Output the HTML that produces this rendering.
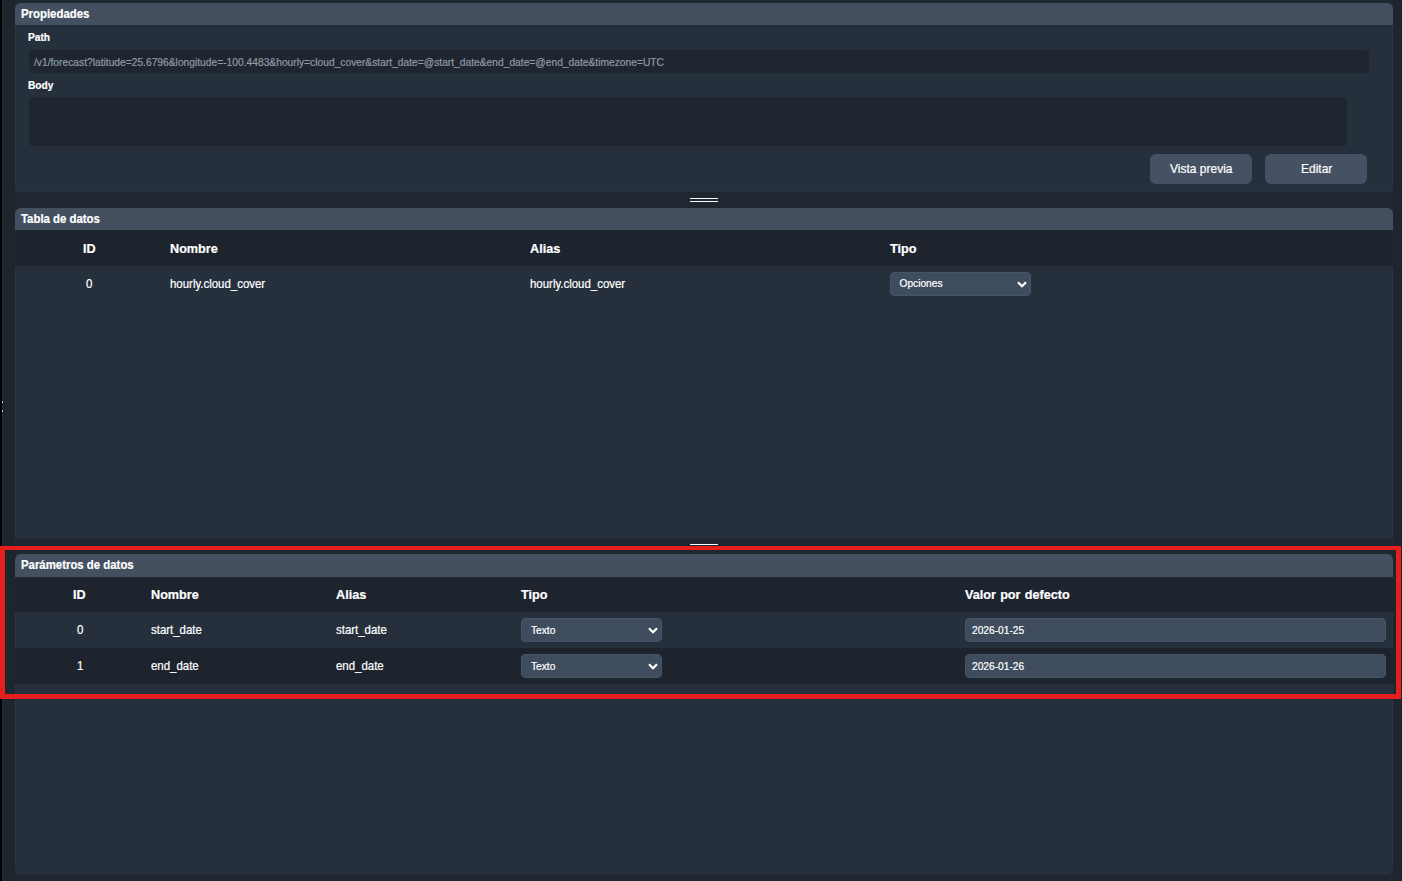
<!DOCTYPE html>
<html><head><meta charset="utf-8">
<style>
html,body{margin:0;padding:0;}
body{width:1402px;height:881px;overflow:hidden;position:relative;background:#1d252d;-webkit-text-stroke:0.2px currentColor;font-family:"Liberation Sans",sans-serif;color:#fff;}
.a{position:absolute;}
.strip{left:0;top:0;width:2px;height:881px;background:#000;}
.strip2{left:2px;top:0;width:1px;height:881px;background:#232c37;}
.panel{position:absolute;left:15px;width:1378px;background:#25303c;border-radius:6px 6px 0 0;overflow:hidden;box-shadow:inset 0 0 0 1px rgba(255,255,255,0.025);}
.hdr{position:absolute;left:0;top:0;width:1378px;background:#445060;}
.ttl,.lbl,.th,.td,.btn span,.sel span,.fld span,.inp span{transform:scaleY(1.08);transform-origin:0 90%;}
.ttl{position:absolute;left:6px;font-weight:bold;font-size:11.4px;white-space:nowrap;line-height:1;}
.lbl{position:absolute;font-weight:bold;font-size:10.2px;line-height:1;white-space:nowrap;}
.inp{position:absolute;background:#1f2630;border-radius:4px;}
.btn{position:absolute;background:#465263;border-radius:6px;font-size:12px;line-height:1;}
.btn span{position:absolute;white-space:nowrap;}
.row{position:absolute;left:0;width:1378px;}
.dark{background:#1e242e;}
.th{position:absolute;font-weight:bold;font-size:12.65px;word-spacing:0.7px;line-height:1;white-space:nowrap;}
.td{position:absolute;font-size:11.45px;line-height:1;white-space:nowrap;}
.sel{position:absolute;background:#3e4c5e;border-radius:5px;box-shadow:inset 0 0 0 1px #46566a;font-size:10.2px;line-height:1;}
.sel span{position:absolute;white-space:nowrap;}
.sel svg{position:absolute;}
.fld{position:absolute;background:#3e4c5e;border-radius:5px;font-size:10.2px;line-height:1;box-shadow:inset 0 0 0 1px #46566a;}
.fld span{position:absolute;white-space:nowrap;}
.split{position:absolute;left:690px;width:28px;height:1px;background:#fff;}
.red{position:absolute;left:0;top:546px;width:1401px;height:153px;box-sizing:border-box;border:5px solid #e61e1e;border-top-width:4px;border-bottom-width:5px;}
</style></head>
<body>
<div class="a" style="left:15px;top:0;width:1378px;height:881px;background:#1f2731;"></div>
<div class="a strip"></div>
<div class="a strip2"></div>

<!-- Panel 1 -->
<div class="panel" style="top:3px;height:189px;border-radius:6px 6px 4px 4px;">
  <div class="hdr" style="height:22px;"></div>
  <div class="ttl" style="top:6px;">Propiedades</div>
  <div class="lbl" style="left:13px;top:30px;">Path</div>
  <div class="inp" style="left:14px;top:47px;width:1340px;height:23px;color:#8e9ba6;font-size:10.25px;line-height:1;">
    <span style="position:absolute;left:5px;top:7.5px;white-space:nowrap;">/v1/forecast?latitude=25.6796&amp;longitude=-100.4483&amp;hourly=cloud_cover&amp;start_date=@start_date&amp;end_date=@end_date&amp;timezone=UTC</span>
  </div>
  <div class="lbl" style="left:13px;top:77.5px;">Body</div>
  <div class="inp" style="left:14px;top:93.5px;width:1318px;height:49px;"></div>
  <div class="btn" style="left:1135px;top:151px;width:102px;height:30px;"><span style="left:20px;top:9px;">Vista previa</span></div>
  <div class="btn" style="left:1250px;top:151px;width:102px;height:30px;"><span style="left:36px;top:9px;">Editar</span></div>
</div>

<div class="split" style="top:198px;"></div>
<div class="split" style="top:201px;"></div>

<!-- Panel 2 -->
<div class="panel" style="top:208px;height:330px;">
  <div class="hdr" style="height:22px;"></div>
  <div class="ttl" style="top:6px;">Tabla de datos</div>
  <div class="row dark" style="top:22px;height:36px;"></div>
  <div class="th" style="left:68px;top:35px;">ID</div>
  <div class="th" style="left:155px;top:35px;">Nombre</div>
  <div class="th" style="left:515px;top:35px;">Alias</div>
  <div class="th" style="left:875px;top:35px;">Tipo</div>
  <div class="td" style="left:71px;top:71px;">0</div>
  <div class="td" style="left:155px;top:71px;">hourly.cloud_cover</div>
  <div class="td" style="left:515px;top:71px;">hourly.cloud_cover</div>
  <div class="sel" style="left:875px;top:64px;width:141px;height:24px;"><span style="left:9.5px;top:7px;">Opciones</span>
    <svg style="left:127px;top:9px;" width="10" height="7" viewBox="0 0 10 7"><path d="M1 1.2 L5 5.2 L9 1.2" fill="none" stroke="#fff" stroke-width="2.2"/></svg></div>
</div>

<div class="split" style="top:544px;"></div>
<div class="split" style="top:547px;"></div>

<!-- Panel 3 -->
<div class="panel" style="top:554px;height:319.5px;border-radius:6px;">
  <div class="hdr" style="height:23px;"></div>
  <div class="ttl" style="top:6.3px;">Parámetros de datos</div>
  <div class="row dark" style="top:23px;height:35px;"></div>
  <div class="th" style="left:58px;top:35px;">ID</div>
  <div class="th" style="left:136px;top:35px;">Nombre</div>
  <div class="th" style="left:321px;top:35px;">Alias</div>
  <div class="th" style="left:506px;top:35px;">Tipo</div>
  <div class="th" style="left:950px;top:35px;">Valor por defecto</div>
  <div class="row dark" style="top:94px;height:36px;"></div>
  <div class="td" style="left:62px;top:71px;">0</div>
  <div class="td" style="left:136px;top:71px;">start_date</div>
  <div class="td" style="left:321px;top:71px;">start_date</div>
  <div class="sel" style="left:506px;top:64px;width:141px;height:24px;"><span style="left:10px;top:8px;">Texto</span>
    <svg style="left:127px;top:9px;" width="10" height="7" viewBox="0 0 10 7"><path d="M1 1.2 L5 5.2 L9 1.2" fill="none" stroke="#fff" stroke-width="2.2"/></svg></div>
  <div class="fld" style="left:950px;top:64px;width:421px;height:24px;"><span style="left:7px;top:8px;">2026-01-25</span></div>
  <div class="td" style="left:62px;top:107px;">1</div>
  <div class="td" style="left:136px;top:107px;">end_date</div>
  <div class="td" style="left:321px;top:107px;">end_date</div>
  <div class="sel" style="left:506px;top:100px;width:141px;height:24px;"><span style="left:10px;top:8px;">Texto</span>
    <svg style="left:127px;top:9px;" width="10" height="7" viewBox="0 0 10 7"><path d="M1 1.2 L5 5.2 L9 1.2" fill="none" stroke="#fff" stroke-width="2.2"/></svg></div>
  <div class="fld" style="left:950px;top:100px;width:421px;height:24px;"><span style="left:7px;top:8px;">2026-01-26</span></div>
</div>

<div class="a" style="left:2px;top:401px;width:1.2px;height:2.2px;background:#ddd;border-radius:1px;"></div>
<div class="a" style="left:2px;top:409.5px;width:1.2px;height:2.2px;background:#ddd;border-radius:1px;"></div>

<div class="red"></div>
</body></html>
